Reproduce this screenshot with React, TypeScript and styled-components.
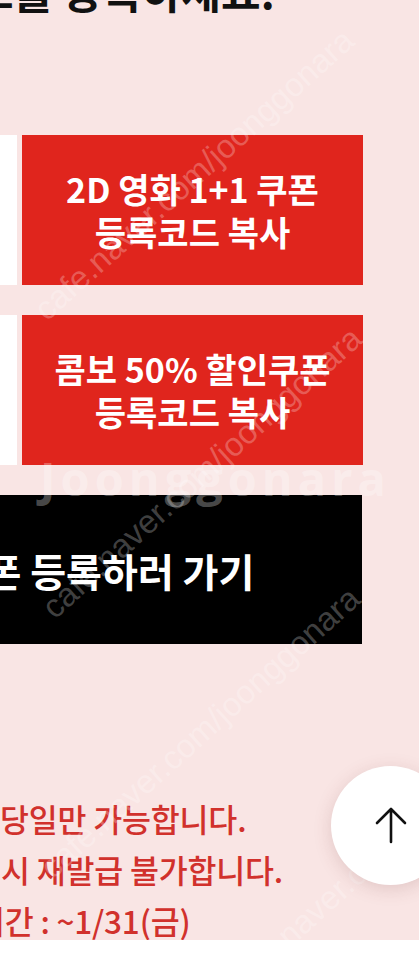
import React from "react";
import styled, { createGlobalStyle } from "styled-components";

const coupons = [
  { title: "2D 영화 1+1 쿠폰", action: "등록코드 복사" },
  { title: "콤보 50% 할인쿠폰", action: "등록코드 복사" },
];

const notices = [
  { text: "당일만 가능합니다.", shift: 0 },
  { text: "시 재발급 불가합니다.", shift: 1 },
  { text: "기간 : ~1/31(금)", shift: -24 },
];

const marks = [
  { x: 50, y: 326 },
  { x: 58, y: 624 },
  { x: 56, y: 884 },
  { x: 240, y: 1000 },
];

const App = () => {
  return (
    <>
      <GlobalStyle />
      <Screen>
        <Sheet>
          <Heading>드를 등록하세요.</Heading>

          <Column>
            {coupons.map((c) => (
              <CouponRow key={c.title}>
                <PlainCard />
                <CopyButton type="button">
                  <span>{c.title}</span>
                  <span>{c.action}</span>
                </CopyButton>
              </CouponRow>
            ))}

            <RegisterButton type="button">쿠폰 등록하러 가기</RegisterButton>
          </Column>

          <Notices>
            {notices.map((n) => (
              <Notice key={n.text} $shift={n.shift}>
                {n.text}
              </Notice>
            ))}
          </Notices>

          <BrandMark aria-hidden>Joonggonara</BrandMark>
          {marks.map((m, i) => (
            <UrlMark key={i} aria-hidden style={{ left: m.x, top: m.y }}>
              cafe.naver.com/joonggonara
            </UrlMark>
          ))}
        </Sheet>

        <Footer />

        <TopButton type="button" aria-label="맨 위로">
          <svg width="32" height="38" viewBox="0 0 32 38" fill="none">
            <path
              d="M16 3 V36 M2 17 L16 3 L30 17"
              stroke="#111"
              strokeWidth="2.6"
              strokeLinecap="round"
              strokeLinejoin="round"
            />
          </svg>
        </TopButton>
      </Screen>
    </>
  );
};

export default App;

const GlobalStyle = createGlobalStyle`
  * { box-sizing: border-box; }
  html, body {
    margin: 0;
    padding: 0;
    background: #ffffff;
  }
  body {
    font-family: "Noto Sans CJK KR", "Noto Sans", sans-serif;
  }
`;

const Screen = styled.div`
  position: relative;
  width: 419px;
  height: 961px;
  overflow: hidden;
  background: #ffffff;
`;

const Sheet = styled.div`
  position: relative;
  height: 940px;
  overflow: hidden;
  background: #f9e5e4;
`;

const Heading = styled.h2`
  margin: -31px 0 0 -26px;
  height: 42px;
  font-size: 43px;
  line-height: 42px;
  font-weight: 700;
  color: #111111;
  white-space: nowrap;
`;

const Column = styled.div`
  width: 521px;
  margin: 124px 0 0 -158px;
  display: flex;
  flex-direction: column;
  gap: 30px;
`;

const CouponRow = styled.div`
  display: flex;
  gap: 5px;
  height: 150px;
`;

const PlainCard = styled.div`
  flex: 1;
  background: #ffffff;
`;

const CopyButton = styled.button`
  width: 341px;
  flex: none;
  border: 0;
  padding: 0;
  background: #e0251d;
  color: #ffffff;
  font-family: "Noto Sans CJK KR", sans-serif;
  font-size: 34px;
  font-weight: 700;
  line-height: 43px;
  display: flex;
  flex-direction: column;
  align-items: center;
  justify-content: center;
`;

const RegisterButton = styled.button`
  width: 520px;
  height: 149px;
  border: 0;
  padding: 0;
  background: #000000;
  color: #ffffff;
  font-family: "Noto Sans CJK KR", sans-serif;
  font-size: 39px;
  font-weight: 700;
  white-space: nowrap;
`;

const Notices = styled.div`
  margin-top: 149px;
  display: flex;
  flex-direction: column;
`;

const Notice = styled.p<{ $shift: number }>`
  margin: 0 0 0 ${({ $shift }) => $shift}px;
  font-size: 31.5px;
  line-height: 51px;
  font-weight: 500;
  color: #d1312c;
  white-space: nowrap;
  letter-spacing: -0.2px;
`;

const BrandMark = styled.div`
  position: absolute;
  left: 40px;
  top: 446px;
  font-family: "Open Sans", sans-serif;
  font-size: 47px;
  font-weight: 700;
  letter-spacing: 5px;
  color: rgba(255, 255, 255, 0.3);
  pointer-events: none;
  white-space: nowrap;
`;

const UrlMark = styled.div`
  position: absolute;
  font-family: "Liberation Sans", Arial, sans-serif;
  font-size: 33px;
  line-height: 33px;
  color: rgba(255, 255, 255, 0.26);
  transform-origin: 0 100%;
  transform: translateY(-33px) rotate(-42deg);
  white-space: nowrap;
  pointer-events: none;
`;

const Footer = styled.div`
  height: 21px;
  background: #ffffff;
`;

const TopButton = styled.button`
  position: absolute;
  left: 331px;
  top: 766px;
  width: 119px;
  height: 119px;
  border: 0;
  padding: 0 0 2px 0;
  border-radius: 50%;
  background: #ffffff;
  box-shadow: 0 4px 18px rgba(120, 60, 60, 0.18);
  display: flex;
  align-items: center;
  justify-content: center;
`;
